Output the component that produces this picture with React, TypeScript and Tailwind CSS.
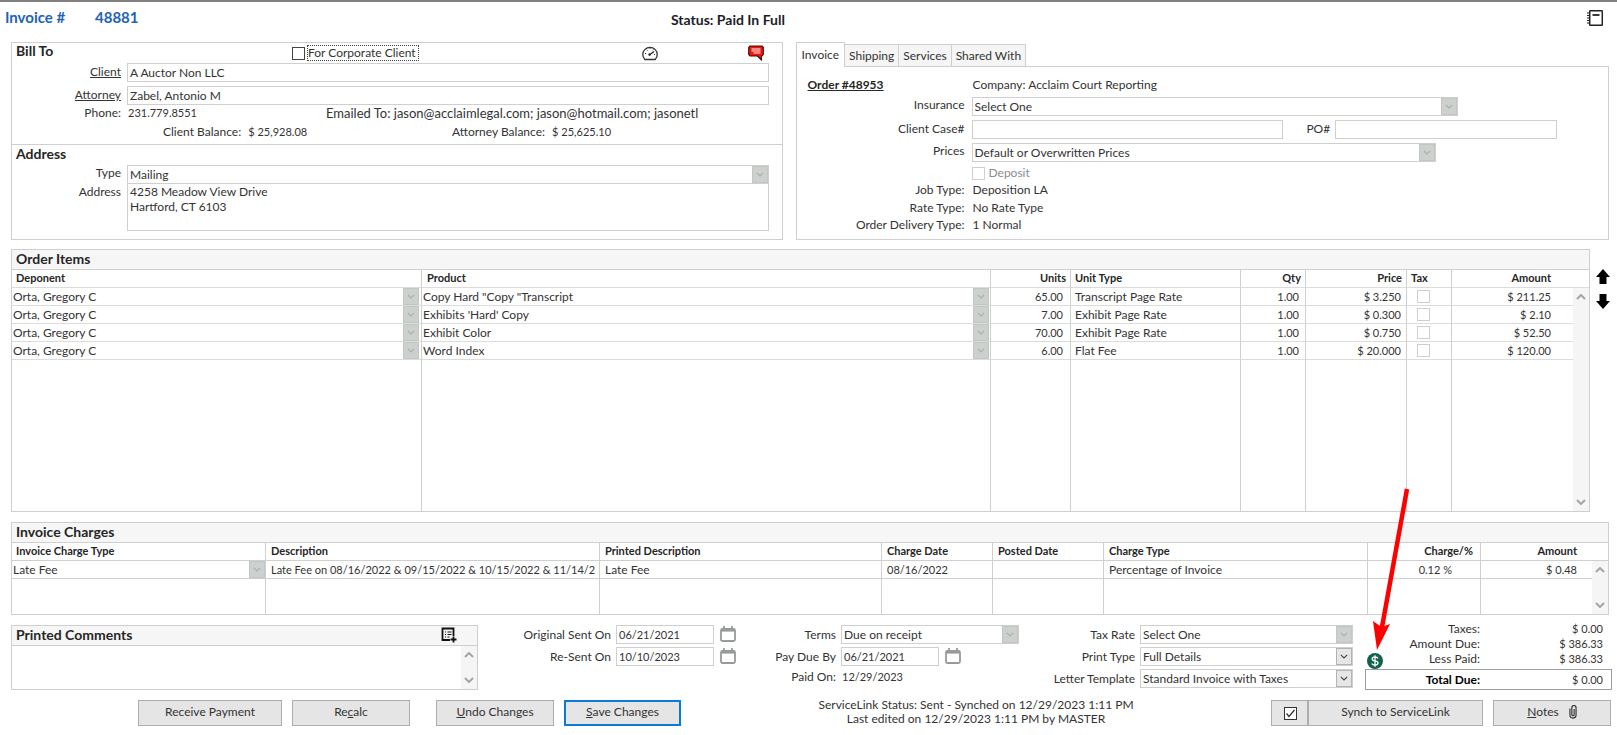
import type { ReactNode } from 'react'
import { useState } from 'react'

interface OrderItem {
  deponent: string
  product: string
  units: string
  unitType: string
  qty: string
  price: string
  amount: string
}

const orderItems: OrderItem[] = [
  { deponent: 'Orta, Gregory C', product: 'Copy Hard "Copy "Transcript', units: '65.00', unitType: 'Transcript Page Rate', qty: '1.00', price: '$ 3.250', amount: '$ 211.25' },
  { deponent: 'Orta, Gregory C', product: "Exhibits 'Hard' Copy", units: '7.00', unitType: 'Exhibit Page Rate', qty: '1.00', price: '$ 0.300', amount: '$ 2.10' },
  { deponent: 'Orta, Gregory C', product: 'Exhibit Color', units: '70.00', unitType: 'Exhibit Page Rate', qty: '1.00', price: '$ 0.750', amount: '$ 52.50' },
  { deponent: 'Orta, Gregory C', product: 'Word Index', units: '6.00', unitType: 'Flat Fee', qty: '1.00', price: '$ 20.000', amount: '$ 120.00' },
]

const tabs = ['Invoice', 'Shipping', 'Services', 'Shared With']

function Chevron({ up = false, className = '' }: { up?: boolean; className?: string }) {
  return (
    <svg viewBox="0 0 10 6" className={className} fill="none" stroke="currentColor">
      <path d={up ? 'M1 5 L5 1 L9 5' : 'M1 1 L5 5 L9 1'} />
    </svg>
  )
}

interface ComboProps {
  value: string
  id?: string
  label?: string
  disabled?: boolean
  plain?: boolean
  className?: string
}

// Drop-down with the flat button on the right; `plain` is the borderless grid cell version
function Combo({ value, id, label, disabled = false, plain = false, className = '' }: ComboProps) {
  return (
    <div className={`grid items-stretch ${plain ? 'h-[17px]' : 'h-[19px] border border-[#cfcfcf]'} ${className}`}>
      <select
        id={id}
        aria-label={label}
        disabled={disabled}
        className={`col-start-1 row-start-1 w-full min-w-0 appearance-none bg-transparent pr-4 leading-4 text-[#333] opacity-100 outline-none ${plain ? 'pl-px' : 'pl-0.5'}`}
      >
        <option>{value}</option>
      </select>
      <span
        className={`pointer-events-none col-start-1 row-start-1 flex w-4 items-center justify-center justify-self-end border ${
          disabled ? 'border-[#c2c7c3] bg-[#cdd1ce] text-[#abafac]' : 'border-[#b4b4b4] bg-[#e6e6e6] text-[#444]'
        }`}
      >
        <Chevron className="w-2 stroke-[1.4]" />
      </span>
    </div>
  )
}

function TextBox({ id, value = '', className = '' }: { id: string; value?: string; className?: string }) {
  return (
    <input
      id={id}
      type="text"
      defaultValue={value}
      className={`h-[19px] min-w-0 border border-[#cfcfcf] bg-white px-0.5 text-[#333] outline-none ${className}`}
    />
  )
}

function CalendarButton({ label }: { label: string }) {
  return (
    <button type="button" aria-label={label} className="mt-px ml-1.5 h-4 w-4 text-[#979b98]">
      <svg viewBox="0 0 16 16" className="h-4 w-4" fill="none" stroke="currentColor">
        <rect x="1" y="3" width="14" height="12" rx="1.5" strokeWidth="1.8" />
        <path d="M1 4.2h14" strokeWidth="2.8" />
        <path d="M4 0v3M12 0v3" strokeWidth="1.8" />
      </svg>
    </button>
  )
}

function ScrollBar() {
  return (
    <div className="flex h-full w-4 flex-col items-center justify-between bg-[#f5f5f5] py-1.5 text-[#a3a7a4]">
      <Chevron up className="w-2.5 stroke-2" />
      <Chevron className="w-2.5 stroke-2" />
    </div>
  )
}

function SectionTitle({ children }: { children: ReactNode }) {
  return (
    <div className="flex h-5 items-center justify-between border-b border-[#cfcfcf] bg-[#f6f6f6] px-1 pb-0.5 text-[14px] font-bold text-[#262626]">
      {children}
    </div>
  )
}

function PushButton({ children, className = '' }: { children: ReactNode; className?: string }) {
  return (
    <button type="button" className={`flex h-[26px] items-center justify-center pb-0.5 ${className}`}>
      {children}
    </button>
  )
}

const grayButton = 'border border-[#adadad] bg-[#e5e5e5]'

function BillTo() {
  return (
    <section className="min-w-0 flex-[770] border border-[#cfcfcf]">
      <div className="h-[102px] border-b border-[#cfcfcf]">
        <div className="flex h-5 items-center pr-[18px] pl-1">
          <h2 className="w-[276px] pb-1 text-[14px] font-bold text-[#262626]">Bill To</h2>
          <input id="corporate" type="checkbox" className="h-[13px] w-[13px] appearance-none border border-[#444] bg-white" />
          <label htmlFor="corporate" className="ml-0.5 w-28 border border-dotted border-[#444] leading-[14px]">
            For Corporate Client
          </label>
          <button type="button" aria-label="Dashboard" className="ml-auto h-4 w-4">
            <svg viewBox="0 0 16 16" className="h-4 w-4" fill="none" stroke="#333">
              <path d="M2.8 14.5A7.2 7.2 0 1 1 13.2 14.5Z" strokeWidth="1.3" />
              <path d="M8 9.5 L12 6.5" strokeWidth="1.5" />
              <circle cx="7.6" cy="9.6" r="1.3" fill="#333" stroke="none" />
              <path d="M3 8.500h1.200M4.500 4.800l.8.8M8 2.600v1.300M11.500 4.600l-.7.8M12 9.500h1" strokeWidth="1" />
            </svg>
          </button>
          <button type="button" aria-label="Messages" className="ml-[90px] h-4 w-4">
            <svg viewBox="0 0 16 16" className="h-4 w-4">
              <path d="M2 1h12l1.300 1.300v7L14 11h-.6v4L9.400 11H2L.7 9.500v-7z" fill="#f21207" stroke="#301010" strokeWidth="1.100" />
              <path d="M3.500 4h9M3.500 6h9M5.500 8h7" stroke="#fff" strokeWidth="1" />
            </svg>
          </button>
        </div>
        <div className="grid grid-cols-[109px_1fr] gap-x-1.5 pr-[13px]">
          <label htmlFor="client" className="h-[23px] text-right leading-[18px] underline">Client</label>
          <TextBox id="client" value="A Auctor Non LLC" />
          <label htmlFor="attorney" className="h-[19px] text-right leading-[18px] underline">Attorney</label>
          <TextBox id="attorney" value="Zabel, Antonio M" />
          <span className="h-[18px] text-right leading-4">Phone:</span>
          <div className="grid grid-cols-[198px_1fr] pl-px leading-4">
            <span className="text-[11px]">231.779.8551</span>
            <span className="text-[13px] whitespace-nowrap">Emailed To: jason@acclaimlegal.com; jason@hotmail.com; jasonetl</span>
          </div>
        </div>
        <div className="grid h-[18px] grid-cols-[289px_1fr] items-center pl-[151px]">
          <span>Client Balance: <span className="ml-1 text-[11px]">$ 25,928.08</span></span>
          <span>Attorney Balance: <span className="ml-1 text-[11px]">$ 25,625.10</span></span>
        </div>
      </div>
      <h2 className="h-5 pl-1 text-[14px] leading-[18px] font-bold text-[#262626]">Address</h2>
      <div className="grid grid-cols-[109px_1fr] gap-x-1.5 pr-[13px]">
        <label htmlFor="address-type" className="text-right">Type</label>
        <Combo id="address-type" value="Mailing" disabled />
        <label htmlFor="address" className="text-right">Address</label>
        <textarea
          id="address"
          defaultValue={'4258 Meadow View Drive\nHartford, CT 6103'}
          className="h-[47px] resize-none overflow-hidden border border-t-0 border-[#cfcfcf] px-0.5 leading-[15px] outline-none"
        />
      </div>
    </section>
  )
}

function InvoiceTabs() {
  const [active, setActive] = useState('Invoice')
  return (
    <section className="flex min-w-0 flex-[814] flex-col">
      <div className="flex h-6 items-end">
        {tabs.map((tab) => (
          <button
            key={tab}
            type="button"
            onClick={() => setActive(tab)}
            className={
              tab === active
                ? 'z-10 -mb-px h-[25px] border border-b-0 border-[#cfcfcf] bg-white px-[5px]'
                : 'h-[22px] border border-b-0 border-l-0 border-[#cfcfcf] bg-[#f5f5f5] px-1'
            }
          >
            {tab}
          </button>
        ))}
      </div>
      <div className="flex-1 border border-[#cfcfcf] pt-2.5 pl-[11px]">
        <div className="grid h-5 grid-cols-[165px_1fr]">
          <a href="#order" className="font-bold text-[#262626] underline">Order #48953</a>
          <span>Company: Acclaim Court Reporting</span>
        </div>
        <div className="grid grid-cols-[157px_1fr] gap-x-[7px]">
          <label htmlFor="insurance" className="h-[23px] text-right">Insurance</label>
          <Combo id="insurance" value="Select One" disabled className="mr-[150px]" />
          <label htmlFor="case" className="h-[23px] text-right leading-[18px]">Client Case#</label>
          <div className="mr-[51px] flex">
            <TextBox id="case" className="flex-[313]" />
            <label htmlFor="po" className="w-[52px] pr-[5px] text-right leading-[18px]">PO#</label>
            <TextBox id="po" className="flex-[221]" />
          </div>
          <label htmlFor="prices" className="h-[22px] text-right">Prices</label>
          <Combo id="prices" value="Default or Overwritten Prices" disabled className="mr-[172px]" />
          <div className="col-start-2 flex h-4 items-center gap-1 text-[#8c8c8c]">
            <input id="deposit" type="checkbox" disabled className="h-[13px] w-[13px] appearance-none border border-[#cfcfcf]" />
            <label htmlFor="deposit">Deposit</label>
          </div>
          <span className="h-[17px] text-right leading-[18px]">Job Type:</span>
          <span className="pl-px leading-[18px]">Deposition LA</span>
          <span className="h-[17px] text-right leading-[18px]">Rate Type:</span>
          <span className="pl-px leading-[18px]">No Rate Type</span>
          <span className="h-4 text-right">Order Delivery Type:</span>
          <span className="pl-px">1 Normal</span>
        </div>
      </div>
    </section>
  )
}

const orderCell = 'h-[18px] border-r border-b border-r-[#cfcfcf] border-b-[#dcdcdc]'

function OrderItems() {
  return (
    <div className="mt-[9px] flex">
      <section className="h-[263px] flex-1 border border-[#cfcfcf]">
        <SectionTitle>Order Items</SectionTitle>
        <table className="h-[241px] w-full table-fixed border-separate border-spacing-0">
          <colgroup>
            <col className="w-[26%]" />
            <col />
            <col className="w-20" />
            <col className="w-[170px]" />
            <col className="w-[65px]" />
            <col className="w-[101px]" />
            <col className="w-[45px]" />
            <col className="w-[121px]" />
            <col className="w-4" />
          </colgroup>
          <thead className="text-[11px] leading-[14px] text-[#262626]">
            <tr>
              <th className={`${orderCell} px-1 pb-0.5 text-left`}>Deponent</th>
              <th className={`${orderCell} px-[5px] pb-0.5 text-left`}>Product</th>
              <th className={`${orderCell} px-1 pb-0.5 text-right`}>Units</th>
              <th className={`${orderCell} px-1 pb-0.5 text-left`}>Unit Type</th>
              <th className={`${orderCell} px-1 pb-0.5 text-right`}>Qty</th>
              <th className={`${orderCell} px-1 pb-0.5 text-right`}>Price</th>
              <th className={`${orderCell} px-1 pb-0.5 text-left`}>Tax</th>
              <th className="h-[18px] border-b border-[#dcdcdc] pr-[22px] pb-0.5 text-right">Amount</th>
              <th className="border-b border-[#dcdcdc]" />
            </tr>
          </thead>
          <tbody>
            {orderItems.map((item, i) => (
              <tr key={i}>
                <td className={`${orderCell} pr-0.5`}><Combo value={item.deponent} label="Deponent" disabled plain /></td>
                <td className={`${orderCell} pr-px`}><Combo value={item.product} label="Product" disabled plain /></td>
                <td className={`${orderCell} pr-[7px] text-right text-[11px]`}>{item.units}</td>
                <td className={`${orderCell} px-1`}>{item.unitType}</td>
                <td className={`${orderCell} pr-1.5 text-right text-[11px]`}>{item.qty}</td>
                <td className={`${orderCell} pr-[5px] text-right text-[11px]`}>{item.price}</td>
                <td className={`${orderCell} pl-2.5`}>
                  <input type="checkbox" aria-label="Tax" disabled className="block h-[13px] w-[13px] appearance-none border border-[#cfcfcf]" />
                </td>
                <td className="h-[18px] border-b border-[#dcdcdc] pr-[22px] text-right text-[11px]">{item.amount}</td>
                {i === 0 && (
                  <td rowSpan={5} className="h-px">
                    <ScrollBar />
                  </td>
                )}
              </tr>
            ))}
            <tr>
              {[0, 1, 2, 3, 4, 5, 6].map((n) => (
                <td key={n} className="h-auto border-r border-[#cfcfcf]" />
              ))}
              <td />
            </tr>
          </tbody>
        </table>
      </section>
      <div className="flex w-[19px] flex-col items-end gap-2 pt-5">
        <button type="button" aria-label="Move up" className="-mr-px h-4 w-[14px]">
          <svg viewBox="0 0 14 16" className="h-4 w-[14px]"><path d="M7 0 L14 8 H10.500 V15 H3.500 V8 H0Z" /></svg>
        </button>
        <button type="button" aria-label="Move down" className="-mr-px h-4 w-[14px]">
          <svg viewBox="0 0 14 16" className="h-4 w-[14px]"><path d="M7 16 L14 8 H10.500 V1 H3.500 V8 H0Z" /></svg>
        </button>
      </div>
    </div>
  )
}

const chargeCell = 'h-[18px] border-r border-b border-[#cfcfcf]'

function InvoiceCharges() {
  return (
    <section className="mt-[10px] border border-[#cfcfcf]">
      <SectionTitle>Invoice Charges</SectionTitle>
      <table className="w-full table-fixed border-separate border-spacing-0">
        <colgroup>
          <col className="w-[254px]" />
          <col className="w-[334px]" />
          <col />
          <col className="w-[111px]" />
          <col className="w-[111px]" />
          <col className="w-[264px]" />
          <col className="w-[113px]" />
          <col className="w-[111px]" />
          <col className="w-4" />
        </colgroup>
        <thead className="text-[11px] leading-[14px] text-[#262626]">
          <tr>
            <th className={`${chargeCell} px-1 pb-0.5 text-left`}>Invoice Charge Type</th>
            <th className={`${chargeCell} px-[5px] pb-0.5 text-left`}>Description</th>
            <th className={`${chargeCell} px-[5px] pb-0.5 text-left`}>Printed Description</th>
            <th className={`${chargeCell} px-[5px] pb-0.5 text-left`}>Charge Date</th>
            <th className={`${chargeCell} px-[5px] pb-0.5 text-left`}>Posted Date</th>
            <th className={`${chargeCell} px-[5px] pb-0.5 text-left`}>Charge Type</th>
            <th className={`${chargeCell} px-[7px] pb-0.5 text-right`}>Charge/%</th>
            <th className="border-b border-[#cfcfcf] pr-[15px] pb-0.5 text-right">Amount</th>
            <th className="border-b border-[#cfcfcf]" />
          </tr>
        </thead>
        <tbody>
          <tr>
            <td className={chargeCell}><Combo value="Late Fee" label="Invoice Charge Type" disabled plain /></td>
            <td className={`${chargeCell} overflow-hidden px-[5px] text-[11px] whitespace-nowrap`}>Late Fee on 08/16/2022 &amp; 09/15/2022 &amp; 10/15/2022 &amp; 11/14/2</td>
            <td className={`${chargeCell} px-[5px]`}>Late Fee</td>
            <td className={`${chargeCell} px-[5px] text-[11px]`}>08/16/2022</td>
            <td className={chargeCell} />
            <td className={`${chargeCell} px-[5px]`}>Percentage of Invoice</td>
            <td className={`${chargeCell} pr-7 text-right text-[11px]`}>0.12 %</td>
            <td className="border-b border-[#cfcfcf] pr-[15px] text-right text-[11px]">$ 0.48</td>
            <td rowSpan={2} className="h-px"><ScrollBar /></td>
          </tr>
          <tr>
            {[0, 1, 2, 3, 4, 5, 6].map((n) => (
              <td key={n} className="h-[35px] border-r border-[#cfcfcf]" />
            ))}
            <td />
          </tr>
        </tbody>
      </table>
    </section>
  )
}

// Green badge with the red pointer drawn above it
function PaidBadge() {
  return (
    <div className="relative ml-0.5 h-4 w-4">
      <svg viewBox="0 0 16 16" className="h-4 w-4">
        <circle cx="8" cy="8" r="8" fill="#12614f" />
        <path
          d="M11 5.500C10.500 4.500 9.500 4 8 4C6.300 4 5.200 4.700 5.200 5.900C5.200 7.200 6.500 7.600 8 7.900C9.600 8.200 11 8.700 11 10.100C11 11.400 9.700 12 8 12C6.400 12 5.200 11.400 4.800 10.400M8 2.200V13.800"
          fill="none"
          stroke="#fff"
          strokeWidth="1.300"
        />
      </svg>
      <svg viewBox="0 0 44 164" className="pointer-events-none absolute bottom-[18px] left-0 z-10 h-[164px] w-11">
        <path d="M40 2 L14.500 143" stroke="#fe0000" strokeWidth="4.500" />
        <path d="M10 163 L6 134 L14.500 140 L23 137Z" fill="#fe0000" />
      </svg>
    </div>
  )
}

function BottomFields() {
  return (
    <div className="mt-[10px] flex h-[65px]">
      <section className="flex w-[467px] flex-col border border-[#cfcfcf]">
        <SectionTitle>
          <label htmlFor="comments">Printed Comments</label>
          <button type="button" aria-label="Add comment" className="mr-4 h-4 w-4">
            <svg viewBox="0 0 16 16" className="h-4 w-4" fill="none" stroke="#111">
              <path d="M9 13H1.500V1.500H12.500V9" strokeWidth="1.800" />
              <path d="M4 5h1M6.500 5h4M4 7.500h1M6.500 7.500h4M4 10h1M6.500 10h2" strokeWidth="1" />
              <path d="M12.500 9.500v6M9.500 12.500h6" strokeWidth="1.800" />
            </svg>
          </button>
        </SectionTitle>
        <div className="flex min-h-0 flex-1">
          <textarea id="comments" className="flex-1 resize-none outline-none" />
          <ScrollBar />
        </div>
      </section>

      <div className="grid flex-1 grid-cols-[138px_98px_22px] content-start gap-y-[3px]">
        <label htmlFor="original-sent" className="pr-[5px] text-right leading-[19px]">Original Sent On</label>
        <TextBox id="original-sent" value="06/21/2021" className="text-[11px]" />
        <CalendarButton label="Pick original sent date" />
        <label htmlFor="re-sent" className="pr-[5px] text-right leading-[19px]">Re-Sent On</label>
        <TextBox id="re-sent" value="10/10/2023" className="text-[11px]" />
        <CalendarButton label="Pick re-sent date" />
      </div>

      <div className="grid w-[240px] grid-cols-[62px_98px_80px] content-start gap-y-[3px]">
        <label htmlFor="terms" className="pr-[5px] text-right leading-[19px]">Terms</label>
        <Combo id="terms" value="Due on receipt" disabled className="col-span-2" />
        <label htmlFor="due-by" className="-ml-2 pr-[5px] text-right leading-[19px] whitespace-nowrap">Pay Due By</label>
        <TextBox id="due-by" value="06/21/2021" className="text-[11px]" />
        <CalendarButton label="Pick due date" />
        <span className="pr-[5px] text-right leading-4">Paid On:</span>
        <span className="pl-px text-[11px] leading-4">12/29/2023</span>
      </div>

      <div className="grid w-[334px] grid-cols-[121px_213px] content-start gap-y-[3px]">
        <label htmlFor="tax-rate" className="pr-[5px] text-right leading-[19px]">Tax Rate</label>
        <Combo id="tax-rate" value="Select One" disabled />
        <label htmlFor="print-type" className="pr-[5px] text-right leading-[19px]">Print Type</label>
        <Combo id="print-type" value="Full Details" />
        <label htmlFor="letter" className="pr-[5px] text-right leading-[19px]">Letter Template</label>
        <Combo id="letter" value="Standard Invoice with Taxes" />
      </div>

      <div className="-mr-[3px] ml-3 w-[247px]">
        <div className="flex h-11 items-end">
          <PaidBadge />
          <dl className="-mt-1 grid flex-1 grid-cols-[97px_1fr] self-start pr-[9px] text-right leading-[15px]">
            <dt>Taxes:</dt>
            <dd className="text-[11px]">$ 0.00</dd>
            <dt>Amount Due:</dt>
            <dd className="text-[11px]">$ 386.33</dd>
            <dt>Less Paid:</dt>
            <dd className="text-[11px]">$ 386.33</dd>
          </dl>
        </div>
        <dl className="grid h-[21px] grid-cols-[114px_1fr] border border-[#9d9d9d] pr-2 text-right leading-[19px]">
          <dt className="font-bold text-black">Total Due:</dt>
          <dd className="text-[11px]">$ 0.00</dd>
        </dl>
      </div>
    </div>
  )
}

function Footer() {
  const [synch, setSynch] = useState(true)
  return (
    <div className="-mr-0.5 mt-[10px] flex pb-2">
      <PushButton className={`${grayButton} ml-[127px] w-36`}>Receive Payment</PushButton>
      <PushButton className={`${grayButton} ml-2.5 w-[118px]`}>Re<u>c</u>alc</PushButton>
      <PushButton className={`${grayButton} ml-[26px] w-[118px]`}><u>U</u>ndo Changes</PushButton>
      <PushButton className="ml-2.5 w-[117px] border-2 border-[#0a7bd6] bg-[#e5e5e5]"><u>S</u>ave Changes</PushButton>
      <div className="-mt-0.5 flex-1 text-center leading-[14px]">
        <p>ServiceLink Status: Sent - Synched on 12/29/2023 1:11 PM</p>
        <p>Last edited on 12/29/2023 1:11 PM by MASTER</p>
      </div>
      <label className={`flex h-[26px] w-[37px] items-center justify-center ${grayButton}`}>
        <input
          type="checkbox"
          aria-label="Synch enabled"
          checked={synch}
          onChange={(e) => setSynch(e.target.checked)}
          className="peer h-[13px] w-[13px] appearance-none border border-[#333] bg-white"
        />
        <svg viewBox="0 0 11 11" className="pointer-events-none invisible -ml-3 h-[11px] w-[11px] peer-checked:visible" fill="none" stroke="#333">
          <path d="M1.500 5.500 L4 8.500 L9.500 2" strokeWidth="1.300" />
        </svg>
      </label>
      <PushButton className={`${grayButton} w-[175px]`}>Synch to ServiceLink</PushButton>
      <PushButton className={`${grayButton} ml-2.5 w-[118px] gap-2.5`}>
        <span><u>N</u>otes</span>
        <svg viewBox="0 0 9 16" className="h-[14px] w-2" fill="none" stroke="#222">
          <path d="M1 4V11.500A3.500 3.500 0 0 0 8 11.500V3A2.200 2.200 0 0 0 3.200 3V11A1.200 1.200 0 0 0 5.800 11V4.500" strokeWidth="1.200" />
        </svg>
      </PushButton>
    </div>
  )
}

export default function App() {
  return (
    <main className="min-w-[1500px] border-t-2 border-[#808080] bg-white font-['Lato','Liberation_Sans',sans-serif] text-[12px] leading-4 text-[#333]">
      <header className="grid h-10 grid-cols-[90px_576px_1fr_auto] pr-[14px] pl-[5px] text-[15px] font-bold text-[#1f63b5]">
        <h1 className="leading-[30px]">Invoice #</h1>
        <span className="leading-[30px]">48881</span>
        <span className="text-[14px] leading-9 text-[#1c1c28]">Status: Paid In Full</span>
        <button type="button" aria-label="Notebook" className="mt-2 h-4 w-4">
          <svg viewBox="0 0 16 16" className="h-4 w-4" fill="none" stroke="#222">
            <rect x="2.700" y="0.700" width="12.600" height="14.600" rx="0.800" strokeWidth="1.500" />
            <path d="M5.500 5h7" strokeWidth="1.800" />
            <path d="M0 3h3M0 5.500h3M0 8h3M0 10.500h3M0 13h3" strokeWidth="1.200" />
          </svg>
        </button>
      </header>
      <div className="pr-2 pl-[11px]">
        <div className="flex h-[198px] gap-[13px]">
          <BillTo />
          <InvoiceTabs />
        </div>
        <OrderItems />
        <InvoiceCharges />
        <BottomFields />
        <Footer />
      </div>
    </main>
  )
}
